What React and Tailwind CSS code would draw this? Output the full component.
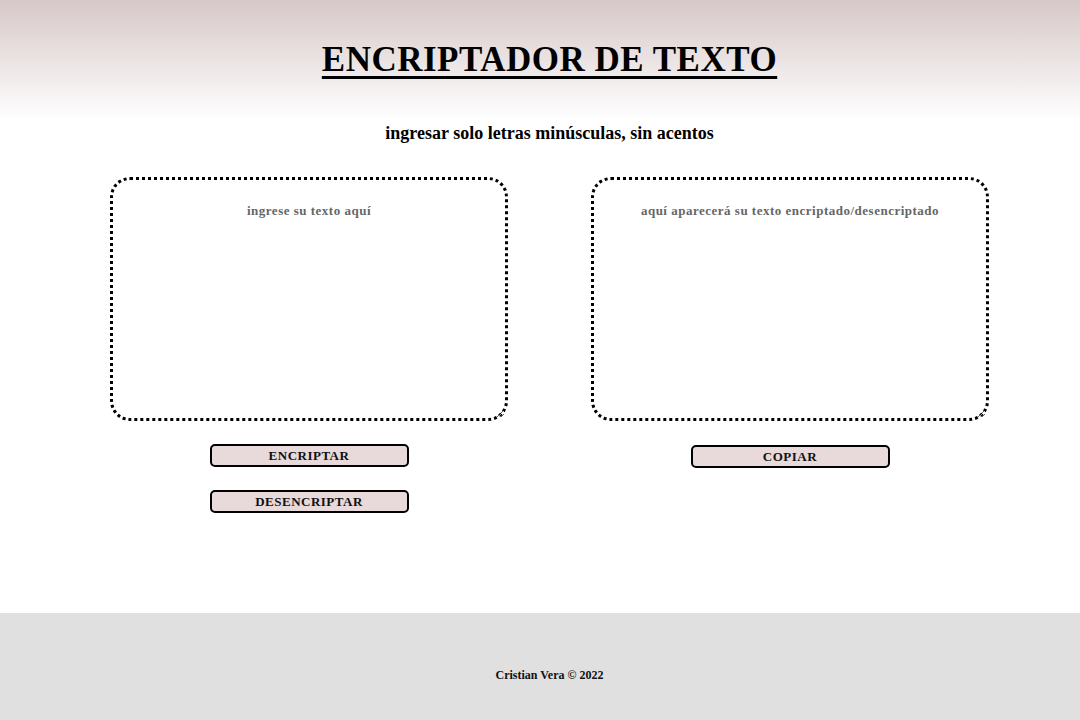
import React, { useState } from "react";

const serif = "font-['Liberation_Serif','DejaVu_Serif',serif]";

const Button = ({ children, onClick }) => (
  <button
    onClick={onClick}
    className={`${serif} w-[199px] h-[23px] bg-[#e8dada] border-2 border-black rounded-[5px] text-[13px] font-bold tracking-[0.5px] text-[#111] leading-none`}
  >
    {children}
  </button>
);

const App = () => {
  const [input, setInput] = useState("");
  const [output, setOutput] = useState("");

  return (
    <div className={`${serif} min-h-[720px] flex flex-col bg-white text-black`}>
      <header className="h-[120px] bg-gradient-to-b from-[#d7c8c8] to-white pl-[19px] pt-[38px] flex justify-center">
        <h1 className="text-[35px] font-bold tracking-[0.5px] underline decoration-[3px] underline-offset-[5px] leading-[44px]">
          ENCRIPTADOR DE TEXTO
        </h1>
      </header>

      <main className="flex-1 pl-[19px] flex flex-col items-center">
        <p className="mt-[1px] text-[18px] font-bold leading-[24px]">
          ingresar solo letras minúsculas, sin acentos
        </p>

        <div className="mt-[32px] flex gap-[83px]">
          <div className="flex flex-col items-center">
            <textarea
              value={input}
              onChange={(e) => setInput(e.target.value)}
              placeholder="ingrese su texto aquí"
              className={`${serif} w-[398px] h-[244px] border-[3px] border-dotted border-black rounded-[20px] pt-[21px] px-4 text-center text-[13px] font-bold tracking-[0.5px] placeholder:text-[#666] outline-none`}
            />
            <div className="mt-[23px] flex flex-col gap-[23px]">
              <Button>ENCRIPTAR</Button>
              <Button>DESENCRIPTAR</Button>
            </div>
          </div>

          <div className="flex flex-col items-center">
            <textarea
              value={output}
              onChange={(e) => setOutput(e.target.value)}
              placeholder="aquí aparecerá su texto encriptado/desencriptado"
              className={`${serif} w-[398px] h-[244px] border-[3px] border-dotted border-black rounded-[20px] pt-[21px] px-4 text-center text-[13px] font-bold tracking-[0.5px] placeholder:text-[#666] outline-none`}
            />
            <div className="mt-[23px]">
              <Button>COPIAR</Button>
            </div>
          </div>
        </div>
      </main>

      <footer className="h-[107px] bg-[#e0e0e0] pl-[19px] pt-[53px] flex justify-center">
        <span className="text-[12px] font-bold text-[#111]">Cristian Vera © 2022</span>
      </footer>
    </div>
  );
};

export default App;
